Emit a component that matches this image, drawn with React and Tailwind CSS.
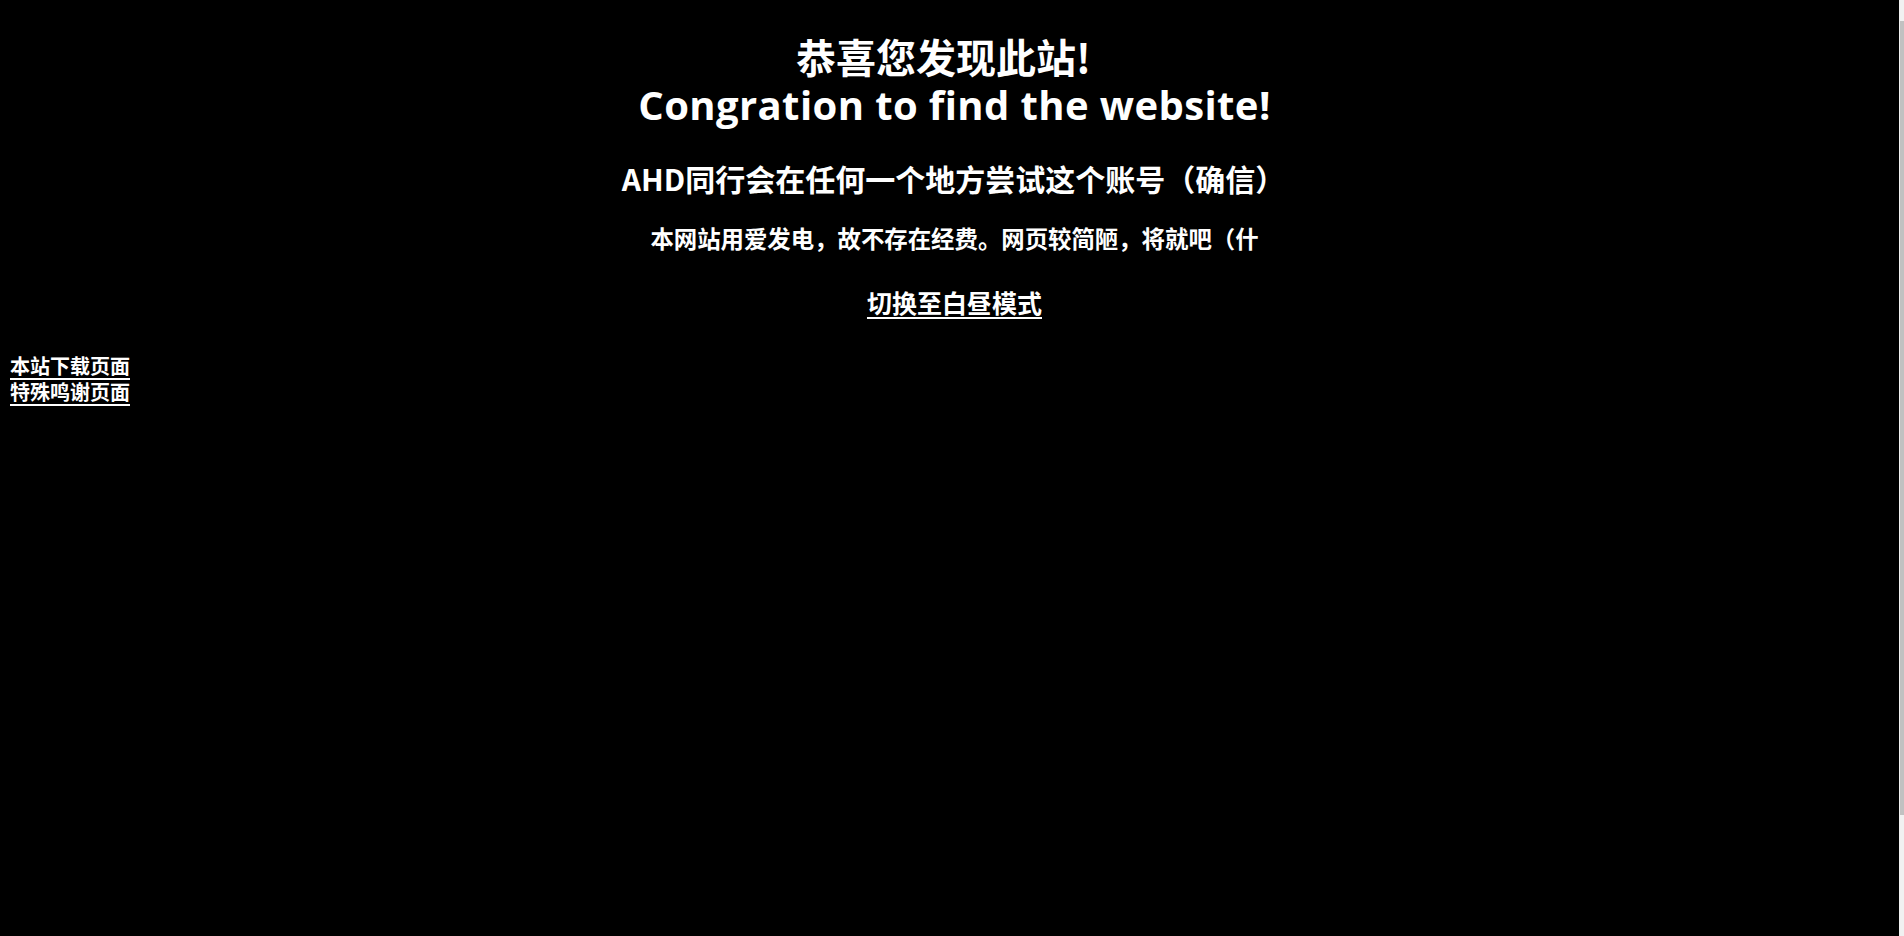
const cjk = "font-['Noto_Sans_CJK_SC',sans-serif]";

export default function App() {
  return (
    <div className="flex h-screen overflow-hidden bg-black">
      <main className={`flex-1 px-[10px] pt-[31px] text-white font-bold ${cjk}`}>
        <h1 className="text-center">
          <span className="block h-[50px] pr-[12px] text-[40px] leading-[50px]">恭喜您发现此站!</span>
          <span className="block h-[47px] pl-[10px] font-['Open_Sans',sans-serif] text-[40px] leading-[47px] tracking-[0.4px]">
            Congration to find the website!
          </span>
        </h1>

        <h2 className="mt-[30px] pl-[8px] text-center text-[30px] leading-[40px]">AHD同行会在任何一个地方尝试这个账号（确信）</h2>

        <p className="mt-[24px] pl-[10px] text-center text-[23.4px] leading-[32px]">本网站用爱发电，故不存在经费。网页较简陋，将就吧（什</p>

        <div className="mt-[32px] pl-[10px] text-center text-[25px] leading-[32px]">
          <a href="#" className="underline decoration-2 underline-offset-[4px]">切换至白昼模式</a>
        </div>

        <div className="mt-[35px] flex flex-col items-start text-[20px] leading-[26px]">
          <a href="#" className="underline decoration-2 underline-offset-[4px]">本站下载页面</a>
          <a href="#" className="underline decoration-2 underline-offset-[4px]">特殊鸣谢页面</a>
        </div>
      </main>

      <div className="flex w-[5px] flex-col bg-[#f1f1f1]">
        <div className="h-[21px]" />
        <div className="ml-[1px] h-[794px] bg-[#c1c1c1]" />
      </div>
    </div>
  );
}
